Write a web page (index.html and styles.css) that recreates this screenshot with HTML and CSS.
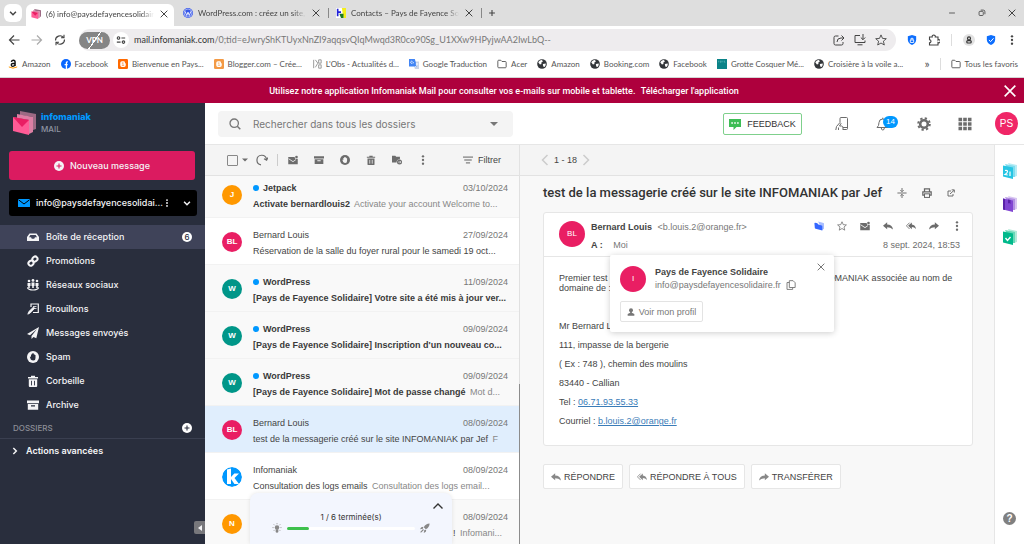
FILE: index.html
```html
<!DOCTYPE html>
<html lang="fr">
  <head>
    <meta charset="utf-8">
    <title>(6) info@paysdefayencesolidaire.fr</title>
    <link rel="stylesheet" href="styles.css">
  </head>
  <body>
    <svg class="sprite" aria-hidden="true">
      <symbol id="x" viewBox="0 0 12 12"><path d="M2 2l8 8M10 2l-8 8" fill="none" stroke="currentColor" stroke-width="1.2"/></symbol>
      <symbol id="down" viewBox="0 0 12 12"><path d="M2.500 4.500L6 8l3.500-3.500" fill="none" stroke="currentColor" stroke-width="1.800"/></symbol>
      <symbol id="left" viewBox="0 0 12 12"><path d="M8.500 1L3.500 6l5 5" fill="none" stroke="currentColor" stroke-width="1.500"/></symbol>
      <symbol id="right" viewBox="0 0 12 12"><path d="M3.500 1l5 5-5 5" fill="none" stroke="currentColor" stroke-width="1.500"/></symbol>
      <symbol id="caret" viewBox="0 0 8 8"><path d="M0 2h8L4 6z" fill="currentColor"/></symbol>
      <symbol id="dots" viewBox="0 0 12 12"><g fill="currentColor"><circle cx="6" cy="1.600" r="1.400"/><circle cx="6" cy="6" r="1.400"/><circle cx="6" cy="10.400" r="1.400"/></g></symbol>
      <symbol id="arrow-left" viewBox="0 0 12 12"><path d="M11.500 6H1.500M6 1.500L1.500 6 6 10.500" fill="none" stroke="currentColor" stroke-width="1.200"/></symbol>
      <symbol id="arrow-right" viewBox="0 0 12 12"><path d="M.5 6h10M6 1.500L10.500 6 6 10.500" fill="none" stroke="currentColor" stroke-width="1.200"/></symbol>
      <symbol id="reload" viewBox="0 0 12 12"><path d="M1.500 6.500a4.500 4.500 0 0 1 8-3M10.500 5.500a4.500 4.500 0 0 1-8 3M10 .8v3H7M2 11.200v-3h3" fill="none" stroke="currentColor" stroke-width="1.100"/></symbol>
      <symbol id="sliders" viewBox="0 0 12 12"><g fill="none" stroke="currentColor" stroke-width="1.300"><circle cx="3" cy="3.500" r="1.500"/><path d="M6.500 3.500H11M1 8.500h4.500"/><circle cx="9" cy="8.500" r="1.500"/></g></symbol>
      <symbol id="share" viewBox="0 0 12 12"><path d="M5.500 2H2.500Q1 2 1 3.500v6Q1 11 2.500 11h6Q10 11 10 9.500V8M4 8q0-4 4-4h3M8.500 1.500L11 4 8.500 6.500" fill="none" stroke="currentColor" stroke-width="1"/></symbol>
      <symbol id="install" viewBox="0 0 12 12"><path d="M6 1.500H1v7h10V6.500M3.500 10.800h5M9 0v5.500M6.800 3.500L9 5.700l2.200-2.200" fill="none" stroke="currentColor" stroke-width="1"/></symbol>
      <symbol id="star" viewBox="0 0 12 12"><path d="M6 .9l1.500 3.500 3.800.3-2.900 2.500.9 3.800L6 9l-3.300 2 .9-3.800L.7 4.700l3.800-.3z" fill="none" stroke="currentColor" stroke-width=".9"/></symbol>
      <symbol id="shield" viewBox="0 0 12 12"><path d="M6 0l5 1.500v4q0 4.500-5 6.500-5-2-5-6.500v-4z" fill="#0d6efd"/></symbol>
      <symbol id="puzzle" viewBox="0 0 12 12"><path d="M1.500 3h2.700a1.600 1.600 0 1 1 3.100 0H10v3a1.500 1.500 0 1 1 0 2.500V11H1.500V8.700a1.500 1.500 0 1 0 0-3z" fill="none" stroke="currentColor" stroke-width="1.100"/></symbol>
      <symbol id="folder" viewBox="0 0 12 12"><path d="M1 2.500Q1 1.500 2 1.500h2.500L6 3h4q1 0 1 1v5.500q0 1-1 1H2q-1 0-1-1z" fill="none" stroke="currentColor" stroke-width="1.100"/></symbol>
      <symbol id="globe" viewBox="0 0 12 12"><circle cx="6" cy="6" r="5.800" fill="#33363a"/><path d="M1.500 4q2-3 4.500-2.800L7 3 5 4.500 5.500 6l-2 .500zM7 6l3.500-.500q.5 2-1.500 4L7.500 9z" fill="#fff"/></symbol>
      <symbol id="blogger" viewBox="0 0 12 12"><rect width="12" height="12" rx="1.500" fill="currentColor"/><path d="M4.700 2.800h2q1.700 0 1.700 1.600 0 .8.900.9v2.200q0 2-2 2H4.700q-2 0-2-2V4.800q0-2 2-2z" fill="#fff"/><path d="M4.600 4.900h2M4.600 7.400h2.800" stroke="currentColor" stroke-width="1"/></symbol>
      <symbol id="cube" viewBox="0 0 24 24"><path d="M8 0l16 3v15l-3 1V6L8 4z" fill="#9d6a84"/><path d="M5 3l16 3v15l-4 2V9L5 7z" fill="#dc7fa4"/><path d="M1 6l16 3v15L1 20z" fill="#ff5b96"/><path d="M1 6l9 10 7-7z" fill="#e91e63"/></symbol>
      <symbol id="plus-circle" viewBox="0 0 12 12"><circle cx="6" cy="6" r="6" fill="currentColor"/><path d="M6 3v6M3 6h6" stroke="var(--cut)" stroke-width="1.300"/></symbol>
      <symbol id="envelope" viewBox="0 0 12 8"><rect width="12" height="8" rx=".5" fill="#0098ff"/><path d="M.5.800L6 5 11.500.800" fill="none" stroke="#000" stroke-width="1"/></symbol>
      <symbol id="inbox" viewBox="0 0 12 12"><path d="M2.500 2.500h7L12 6v4H0V6zM3.300 4L2 6.300h2l.8 1.400h2.400L8 6.300h2L8.700 4z" fill="currentColor" fill-rule="evenodd"/></symbol>
      <symbol id="link" viewBox="0 0 12 12"><g fill="none" stroke="currentColor" stroke-width="2"><rect x="5.300" y="1.700" width="5.200" height="4.600" rx="2.200" transform="rotate(-40 8 4)"/><rect x="1.300" y="5.800" width="5.200" height="4.600" rx="2.200" transform="rotate(-40 4 8)"/></g></symbol>
      <symbol id="people" viewBox="0 0 12 12"><g fill="currentColor"><circle cx="2" cy="2" r="1.300"/><circle cx="6" cy="1.400" r="1.400"/><circle cx="10" cy="2" r="1.300"/><path d="M.5 4h3v3h-.7v2H1.200V7H.5zM4.500 3.400h3V7h-.7v2H5.200V7h-.7zM8.500 4h3v3h-.7v2H9.200V7h-.7z"/></g><path d="M.3 8.500q1 2.500 5.700 2.500t5.700-2.500" fill="none" stroke="currentColor" stroke-width="1.200"/></symbol>
      <symbol id="draft" viewBox="0 0 12 12"><path d="M4 4V1h7.300v8.500H6" fill="none" stroke="currentColor" stroke-width="1.200"/><path d="M6 3.500h3.500M6.500 5.500h3M.8 11.200l1-2.600L6.500 4l1.200 1.300L3.200 10z" fill="currentColor" stroke="currentColor" stroke-width=".8"/></symbol>
      <symbol id="plane" viewBox="0 0 12 12"><path d="M12 0L0 7l3 1.200L10 2 4.500 8.900V12l2-2 2.800 1.200z" fill="currentColor"/></symbol>
      <symbol id="hand" viewBox="0 0 12 12"><circle cx="6" cy="6" r="6" fill="currentColor"/><path d="M3.800 8.500L2.800 5.800l.7-.2.500.6V3.500h.9v-.9h.9v-.3h.9v.9h.9v.7h.9V7Q8.500 9.600 6.500 9.600 4.700 9.600 3.800 8.500z" fill="var(--cut)"/></symbol>
      <symbol id="trash" viewBox="0 0 12 12"><path d="M1 2h3V.8h4V2h3v1.400H1zM1.800 4.200h8.400V11q0 1-1 1H2.800q-1 0-1-1z" fill="currentColor"/><path d="M4.500 5.800v4.600M7.500 5.800v4.600" stroke="var(--cut)" stroke-width=".9"/></symbol>
      <symbol id="archive" viewBox="0 0 12 12"><path d="M0 1.500h12v2.800H0zM.8 5.100h10.400v5.600H.8zM4 6.200v1.300h4V6.200z" fill="currentColor" fill-rule="evenodd"/></symbol>
      <symbol id="search" viewBox="0 0 12 12"><circle cx="5.200" cy="5.200" r="4.200" fill="none" stroke="currentColor" stroke-width="1.300"/><path d="M8.300 8.300l3 3" stroke="currentColor" stroke-width="1.500"/></symbol>
      <symbol id="sync" viewBox="0 0 12 12"><path d="M5 10.800a4.800 4.800 0 1 1 5.500-5.500M8 4.800l2.600 1.300L12 3.500" fill="none" stroke="currentColor" stroke-width="1.200"/></symbol>
      <symbol id="unread" viewBox="0 0 12 12"><path d="M.3 2.500H8a2.200 2.200 0 0 0 3.700 1.800V11H.3z" fill="currentColor"/><path d="M.8 4.500L6 8l3.500-2.500" fill="none" stroke="var(--cut)" stroke-width="1"/><circle cx="10.200" cy="2.500" r="1.600" fill="currentColor"/></symbol>
      <symbol id="move" viewBox="0 0 12 12"><path d="M0 1h4l1 1.200h4.500V5A3.800 3.800 0 0 0 5.500 9H0z" fill="currentColor"/><circle cx="9" cy="8.500" r="3" fill="currentColor"/><path d="M7.300 8.500h3.200M9.300 7.200l1.300 1.300-1.300 1.300" fill="none" stroke="var(--cut)" stroke-width=".8"/></symbol>
      <symbol id="filter" viewBox="0 0 12 12"><path d="M0 2.500h12M1.500 6h9M3.500 9.500h5" stroke="currentColor" stroke-width="1"/></symbol>
      <symbol id="chat" viewBox="0 0 12 12"><path d="M0 1h12v8H7.500L4.500 12V9H0z" fill="#3dbd55"/><path d="M2.300 5h1.600M5.200 5h1.600M8.100 5h1.600" stroke="#fff" stroke-width="1.400"/></symbol>
      <symbol id="phone" viewBox="0 0 14 14"><path d="M5 5V1.500Q5 .5 6 .5h5.500q1 0 1 1v10q0 1-1 1H8M8 10.500h4M.8 13l.7-3.500L5 5.500l1 1L4.500 9h2Q8 9 8 11v2M3.500 10.500V13" fill="none" stroke="currentColor" stroke-width="1"/></symbol>
      <symbol id="bell" viewBox="0 0 14 14"><path d="M1 10.500h11.500Q10.500 9 10.500 5.500 10.500 2 6.800 2T3 5.500Q3 9 1 10.500zM5.300 11q0 2 1.500 2t1.500-2M6.800 2V.7" fill="none" stroke="currentColor" stroke-width="1"/></symbol>
      <symbol id="gear" viewBox="0 0 14 14"><circle cx="7" cy="7" r="3.800" fill="none" stroke="currentColor" stroke-width="2.600"/><circle cx="7" cy="7" r="5.800" fill="none" stroke="currentColor" stroke-width="2" stroke-dasharray="2.280 2.280"/></symbol>
      <symbol id="apps" viewBox="0 0 14 14"><path d="M.5 2.500h13M.5 7h13M.5 11.500h13" stroke="currentColor" stroke-width="3.400" stroke-dasharray="3.600 1.100"/></symbol>
      <symbol id="collapse" viewBox="0 0 12 12"><path d="M.5 6h11M6 0v4M6 8v4M4 2.500l2 2 2-2M4 9.500l2-2 2 2" fill="none" stroke="currentColor" stroke-width="1.100"/></symbol>
      <symbol id="print" viewBox="0 0 12 12"><path d="M3 4V1h6v3M3 8.500H1V4.500h10v4H9" fill="none" stroke="currentColor" stroke-width="1.500"/><rect x="3" y="7" width="6" height="4.300" fill="none" stroke="currentColor" stroke-width="1.200"/></symbol>
      <symbol id="external" viewBox="0 0 12 12"><path d="M6 3H1.500v7.500H9V7.500M4.500 7.500L10.500 2M7 1.300h4v4" fill="none" stroke="currentColor" stroke-width="1.400"/></symbol>
      <symbol id="reply" viewBox="0 0 12 12"><path d="M5 1.500v2.700q6 0 7 6Q9 7.500 5 7.500V10L0 5.800z" fill="currentColor"/></symbol>
      <symbol id="reply-all" viewBox="0 0 12 12"><path d="M7 1.800v2.400q4.300.3 5 5.500Q10 7.500 7 7.300V9.800L2.500 5.800z" fill="currentColor"/><path d="M4.300 2L.5 5.800l3.800 3.800" fill="none" stroke="currentColor" stroke-width="1"/></symbol>
      <symbol id="forward" viewBox="0 0 12 12"><path d="M7 1.500v2.700q-6 0-7 6Q3 7.500 7 7.500V10l5-4.200z" fill="currentColor"/></symbol>
      <symbol id="kdrive" viewBox="0 0 12 12"><path d="M5 .500l6.500 2q.5 0 .5.800v6L9.500 11z" fill="#a9beff"/><path d="M.5 2.800q0-1 1-.8l2.500.7 1.200 1.600 4 1q.8.200.8 1v5.200L2 9.300q-.9-.2-1-1z" fill="#3467ff"/></symbol>
      <symbol id="copy" viewBox="0 0 12 12"><path d="M4 .8h4.500L11 3.300V9H4zM4 3H1.200v8.300H8V9" fill="none" stroke="currentColor" stroke-width="1.100"/></symbol>
      <symbol id="person" viewBox="0 0 12 12"><circle cx="6" cy="3.300" r="3" fill="currentColor"/><path d="M4.700 5h2.600v2.300L11 9v2.500H1V9l3.700-1.700z" fill="currentColor"/></symbol>
      <symbol id="bulb" viewBox="0 0 12 12"><circle cx="6" cy="5.500" r="2.700" fill="currentColor"/><path d="M4.800 8h2.400v3H4.800zM6 0v1.500M.5 5.500H2M10 5.500h1.500M2 1.500l1.200 1.200M10 1.500L8.800 2.700M2 9.500l1.200-1.200M10 9.500L8.800 8.300" fill="currentColor" stroke="currentColor" stroke-width=".8"/></symbol>
      <symbol id="rocket" viewBox="0 0 12 12"><path d="M11.500.5Q7 .5 4.500 5L7 7.500Q11.500 5 11.500.5zM4 4.500L1.500 5 0 7.500l3.500-.7zM7.500 8l-.5 2.500L4.500 12l.7-3.500zM3.700 7.300l1 1L1.500 11.500H.5v-1z" fill="currentColor"/></symbol>
    </svg>

    <!-- browser -->
    <div class="tabbar">
      <button class="tab-search" aria-label="Rechercher des onglets"><svg class="i10"><use href="#down"/></svg></button>
      <div class="tab tab-active">
        <svg class="i10"><use href="#cube"/></svg>
        <span class="tab-title">(6) info@paysdefayencesolidaire.fr</span>
        <button aria-label="Fermer"><svg class="i10"><use href="#x"/></svg></button>
      </div>
      <div class="tab">
        <svg class="i10" viewBox="0 0 12 12"><circle cx="6" cy="6" r="6" fill="#3858e9"/><circle cx="6" cy="6" r="4.800" fill="none" stroke="#fff" stroke-width=".6"/><path d="M2.500 4l2 5L6 5l1.500 4 2-5" fill="none" stroke="#fff"/></svg>
        <span class="tab-title">WordPress.com : créez un site, vendez</span>
        <button aria-label="Fermer"><svg class="i10"><use href="#x"/></svg></button>
      </div>
      <span class="tab-sep"></span>
      <div class="tab">
        <svg class="i10" viewBox="0 0 12 12"><path d="M0 0h12v12H0z" fill="#fff"/><path d="M7 0h5v12H9z" fill="#f4ef1b"/><path d="M1 1h2v9H1zM3 4h3v2H3z" fill="#2222d8"/><path d="M4 7h5v5H6z" fill="#1c7a26"/></svg>
        <span class="tab-title">Contacts – Pays de Fayence Solidaire</span>
        <button aria-label="Fermer"><svg class="i10"><use href="#x"/></svg></button>
      </div>
      <span class="tab-sep"></span>
      <button class="new-tab" aria-label="Nouvel onglet"><svg class="i10" viewBox="0 0 12 12"><path d="M6 2.500v7M2.500 6h7" stroke="currentColor" stroke-width="1.300"/></svg></button>
      <div class="window-buttons">
        <button aria-label="Réduire"><svg class="i10" viewBox="0 0 12 12"><path d="M2.500 6h7" stroke="currentColor"/></svg></button>
        <button aria-label="Restaurer"><svg class="i10" viewBox="0 0 12 12"><rect x="2.500" y="4" width="5" height="5" rx="1" fill="none" stroke="currentColor"/><path d="M4.500 2.500h3q2 0 2 2v3" fill="none" stroke="currentColor"/></svg></button>
        <button aria-label="Quitter"><svg class="i10"><use href="#x"/></svg></button>
      </div>
    </div>

    <div class="navbar">
      <button aria-label="Retour"><svg class="i12"><use href="#arrow-left"/></svg></button>
      <button class="disabled" aria-label="Suivant"><svg class="i12"><use href="#arrow-right"/></svg></button>
      <button aria-label="Actualiser"><svg class="i12"><use href="#reload"/></svg></button>
      <div class="omnibox">
        <span class="vpn">VPN</span>
        <span class="site-info"><svg class="i10"><use href="#sliders"/></svg></span>
        <span class="url"><b>mail.infomaniak.com</b>/0;tid=eJwryShKTUyxNnZI9aqqsvQIqMwqd3R0co90Sg_U1XXw9HPyjwAA2IwLbQ--</span>
        <svg class="i12"><use href="#share"/></svg>
        <svg class="i12"><use href="#install"/></svg>
        <svg class="i12"><use href="#star"/></svg>
      </div>
      <div class="extensions">
        <svg class="i10" viewBox="0 0 12 12"><use href="#shield"/><path d="M4 6h4v3H4zM4.800 6V4h2.400v2" fill="none" stroke="#fff"/></svg>
        <svg class="i12"><use href="#puzzle"/></svg>
        <span class="nav-sep"></span>
        <svg class="i12" viewBox="0 0 12 12"><circle cx="6" cy="6" r="6" fill="#e2e2e2"/><circle cx="6" cy="4.400" r="1.500" fill="none" stroke="#333" stroke-width="1.200"/><rect x="3.800" y="6.600" width="4.400" height="2.400" rx="1" fill="none" stroke="#333" stroke-width="1.200"/></svg>
        <svg class="i10" viewBox="0 0 12 12"><use href="#shield"/><path d="M3.500 6l2 2 3.500-4" fill="none" stroke="#fff" stroke-width="1.200"/></svg>
        <svg class="i10"><use href="#dots"/></svg>
      </div>
    </div>

    <div class="bookmarks">
      <a href="#"><svg class="i10" viewBox="0 0 12 12"><path d="M4 3.500Q4.500 1.500 6.500 1.500T8.500 4v4.500M8.500 5Q4 5 4 7t2 1.800T8.500 6.500" fill="none" stroke="#111" stroke-width="1.700"/><path d="M1 9.500q5 3 10 0" fill="none" stroke="#f90" stroke-width="1.200"/></svg>Amazon</a>
      <a href="#"><svg class="i10" viewBox="0 0 12 12"><circle cx="6" cy="6" r="6" fill="#0866ff"/><path d="M6.500 12V4.700q0-1.500 1.700-1.300M4.300 6.800h3.700" fill="none" stroke="#fff" stroke-width="1.600"/></svg>Facebook</a>
      <a href="#"><svg class="i10 blog"><use href="#blogger"/></svg>Bienvenue en Pays...</a>
      <a href="#"><svg class="i10 blog-light"><use href="#blogger"/></svg>Blogger.com – Crée...</a>
      <a href="#"><svg class="i10" viewBox="0 0 12 12"><path d="M2 1v10M4 1l3 4-3 5M8 1v4h3V1zM8 7h3v4H8z" fill="none" stroke="#888"/></svg>L'Obs - Actualités d...</a>
      <a href="#"><svg class="i10" viewBox="0 0 12 12"><path d="M5 3h7v9H7z" fill="#c9d3e6"/><path d="M0 0h7l2.500 9H0z" fill="#4285f4"/><path d="M6 4.500H4.500a1.300 1.300 0 1 1-.3-1.500M8 6h3M9.500 5v1q0 2-2 3.500" fill="none" stroke="#fff" stroke-width=".9"/></svg>Google Traduction</a>
      <a href="#"><svg class="i10"><use href="#folder"/></svg>Acer</a>
      <a href="#"><svg class="i10"><use href="#globe"/></svg>Amazon</a>
      <a href="#"><svg class="i10"><use href="#globe"/></svg>Booking.com</a>
      <a href="#"><svg class="i10"><use href="#globe"/></svg>Facebook</a>
      <a href="#"><svg class="i10" viewBox="0 0 12 12"><path d="M0 0h12v12H0z" fill="#0b8388"/><path d="M2 2v2M4 2v2h1V2M7 2v2M9 2v2h1" fill="none" stroke="#69bdc0" stroke-width=".7"/></svg>Grotte Cosquer Mé...</a>
      <a href="#"><svg class="i10"><use href="#globe"/></svg>Croisière à la voile a...</a>
      <div class="bookmarks-end">
        <span class="more">»</span>
        <span class="nav-sep"></span>
        <a href="#"><svg class="i10"><use href="#folder"/></svg>Tous les favoris</a>
      </div>
    </div>

    <div class="banner">
      <p>Utilisez notre application Infomaniak Mail pour consulter vos e-mails sur mobile et tablette. <a href="#">Télécharger l'application</a></p>
      <button aria-label="Fermer"><svg class="i16"><use href="#x"/></svg></button>
    </div>

    <div class="app">
      <div class="sidebar">
        <div class="brand">
          <svg class="i24"><use href="#cube"/></svg>
          <div><strong>infomaniak</strong><span>MAIL</span></div>
        </div>
        <button class="compose"><svg class="i10"><use href="#plus-circle"/></svg>Nouveau message</button>
        <div class="account">
          <svg class="mail"><use href="#envelope"/></svg>
          <span>info@paysdefayencesolidai...</span>
          <svg class="i8"><use href="#dots"/></svg>
          <svg class="i10"><use href="#down"/></svg>
        </div>
        <nav class="folders">
          <a class="active" href="#"><svg class="i12"><use href="#inbox"/></svg>Boîte de réception<span class="count">6</span></a>
          <a href="#"><svg class="i12"><use href="#link"/></svg>Promotions</a>
          <a href="#"><svg class="i12"><use href="#people"/></svg>Réseaux sociaux</a>
          <a href="#"><svg class="i12"><use href="#draft"/></svg>Brouillons</a>
          <a href="#"><svg class="i12"><use href="#plane"/></svg>Messages envoyés</a>
          <a href="#"><svg class="i12"><use href="#hand"/></svg>Spam</a>
          <a href="#"><svg class="i12"><use href="#trash"/></svg>Corbeille</a>
          <a href="#"><svg class="i12"><use href="#archive"/></svg>Archive</a>
        </nav>
        <div class="folders-title">DOSSIERS <button aria-label="Nouveau dossier"><svg class="i10"><use href="#plus-circle"/></svg></button></div>
        <button class="advanced"><svg class="i8" viewBox="0 0 12 12"><path d="M3.500 1.500L8 6l-4.500 4.500" fill="none" stroke="currentColor" stroke-width="2.200"/></svg>Actions avancées</button>
        <button class="fold" aria-label="Réduire le menu"><svg class="i8" viewBox="0 0 8 8"><path d="M6 1v6L2 4z" fill="currentColor"/></svg></button>
      </div>

      <div class="main">
        <div class="header">
          <div class="search">
            <svg class="i12"><use href="#search"/></svg>
            <input type="text" placeholder="Rechercher dans tous les dossiers" aria-label="Rechercher">
            <svg class="i8"><use href="#caret"/></svg>
          </div>
          <div class="header-right">
            <button class="feedback"><svg class="i12"><use href="#chat"/></svg>FEEDBACK</button>
            <button aria-label="Mobile"><svg class="i14"><use href="#phone"/></svg></button>
            <button class="bell" aria-label="Notifications"><svg class="i14"><use href="#bell"/></svg><span class="badge">14</span></button>
            <button aria-label="Paramètres"><svg class="i14"><use href="#gear"/></svg></button>
            <button aria-label="Applications"><svg class="i14"><use href="#apps"/></svg></button>
            <span class="avatar avatar-me">PS</span>
          </div>
        </div>

        <div class="columns">
          <div class="list">
            <div class="toolbar">
              <input type="checkbox" aria-label="Tout sélectionner">
              <svg class="i6"><use href="#caret"/></svg>
              <button class="sync" aria-label="Actualiser"><svg class="i12"><use href="#sync"/></svg></button>
              <span class="tool-sep"></span>
              <div class="tools">
                <button aria-label="Non lu"><svg class="i10"><use href="#unread"/></svg></button>
                <button aria-label="Archiver"><svg class="i10"><use href="#archive"/></svg></button>
                <button aria-label="Spam"><svg class="i10"><use href="#hand"/></svg></button>
                <button aria-label="Supprimer"><svg class="i10"><use href="#trash"/></svg></button>
                <button aria-label="Déplacer"><svg class="i10"><use href="#move"/></svg></button>
                <button aria-label="Plus"><svg class="i10"><use href="#dots"/></svg></button>
              </div>
              <button class="filter"><svg class="i10"><use href="#filter"/></svg>Filtrer</button>
            </div>

            <div class="messages">
              <div class="rows">
                <div class="row unread">
                  <span class="avatar orange">J</span>
                  <div class="from"><strong>Jetpack</strong><time>03/10/2024</time></div>
                  <p><strong>Activate bernardlouis2</strong> Activate your account Welcome to...</p>
                </div>
                <div class="row">
                  <span class="avatar pink">BL</span>
                  <div class="from"><strong>Bernard Louis</strong><time>27/09/2024</time></div>
                  <p><strong>Réservation de la salle du foyer rural pour le samedi 19 oct...</strong></p>
                </div>
                <div class="row unread">
                  <span class="avatar green">W</span>
                  <div class="from"><strong>WordPress</strong><time>11/09/2024</time></div>
                  <p><strong>[Pays de Fayence Solidaire] Votre site a été mis à jour ver...</strong></p>
                </div>
                <div class="row unread">
                  <span class="avatar green">W</span>
                  <div class="from"><strong>WordPress</strong><time>09/09/2024</time></div>
                  <p><strong>[Pays de Fayence Solidaire] Inscription d'un nouveau co...</strong></p>
                </div>
                <div class="row unread">
                  <span class="avatar green">W</span>
                  <div class="from"><strong>WordPress</strong><time>09/09/2024</time></div>
                  <p><strong>[Pays de Fayence Solidaire] Mot de passe changé</strong> Mot d...</p>
                </div>
                <div class="row selected">
                  <span class="avatar pink">BL</span>
                  <div class="from"><strong>Bernard Louis</strong><time>08/09/2024</time></div>
                  <p><strong>test de la messagerie créé sur le site INFOMANIAK par Jef</strong> F</p>
                </div>
                <div class="row">
                  <svg class="avatar" viewBox="0 0 20 20"><circle cx="10" cy="10" r="10" fill="#0098ff"/><path d="M5 2.500l4-1V10l3.300-3.500H17L12.500 11l4.500 6h-4.600L9 12v5H5z" fill="#fff"/></svg>
                  <div class="from"><strong>Infomaniak</strong><time>08/09/2024</time></div>
                  <p><strong>Consultation des logs emails</strong> Consultation des logs email...</p>
                </div>
                <div class="row seen">
                  <span class="avatar orange">N</span>
                  <div class="from"><time>08/09/2024</time></div>
                  <p class="tail"><strong>!</strong> Infomani...</p>
                </div>
              </div>
              <div class="scrollbar"><span></span></div>
              <div class="onboarding">
                <svg class="i12 fold-up" viewBox="0 0 12 12"><path d="M1.500 8.500L6 4l4.500 4.500" fill="none" stroke="currentColor" stroke-width="1.400"/></svg>
                <p>1 / 6 terminée(s)</p>
                <div class="progress">
                  <svg class="i10"><use href="#bulb"/></svg>
                  <div class="bar"><span style="width: 17%"></span></div>
                  <svg class="i10"><use href="#rocket"/></svg>
                </div>
              </div>
            </div>
          </div>

          <div class="reader">
            <div class="toolbar pager">
              <button aria-label="Précédent"><svg class="i12"><use href="#left"/></svg></button>
              <span>1 - 18</span>
              <button aria-label="Suivant"><svg class="i12"><use href="#right"/></svg></button>
            </div>
            <div class="thread">
              <div class="subject">
                <h1>test de la messagerie créé sur le site INFOMANIAK par Jef</h1>
                <button aria-label="Réduire"><svg class="i10"><use href="#collapse"/></svg></button>
                <button aria-label="Imprimer"><svg class="i10"><use href="#print"/></svg></button>
                <button aria-label="Ouvrir"><svg class="i8"><use href="#external"/></svg></button>
              </div>

              <div class="card">
                <div class="card-head">
                  <span class="avatar pink big">BL</span>
                  <div class="people">
                    <p><strong>Bernard Louis</strong> &lt;b.louis.2@orange.fr&gt;</p>
                    <p><strong class="to">A :</strong> Moi</p>
                  </div>
                  <div class="card-right">
                    <div class="card-actions">
                      <svg class="i10"><use href="#kdrive"/></svg>
                      <button aria-label="Favori"><svg class="i10"><use href="#star"/></svg></button>
                      <button aria-label="Non lu"><svg class="i10"><use href="#unread"/></svg></button>
                      <button aria-label="Répondre"><svg class="i10"><use href="#reply"/></svg></button>
                      <button aria-label="Répondre à tous"><svg class="i10"><use href="#reply-all"/></svg></button>
                      <button aria-label="Transférer"><svg class="i10"><use href="#forward"/></svg></button>
                      <button aria-label="Plus"><svg class="i10"><use href="#dots"/></svg></button>
                    </div>
                    <time>8 sept. 2024, 18:53</time>
                  </div>
                  <div class="contact">
                    <span class="avatar pink big">I</span>
                    <div class="contact-text">
                      <strong>Pays de Fayence Solidaire</strong>
                      <span>info@paysdefayencesolidaire.fr <svg class="i10"><use href="#copy"/></svg></span>
                    </div>
                    <button class="close" aria-label="Fermer"><svg class="i10"><use href="#x"/></svg></button>
                    <button class="profile"><svg class="i8"><use href="#person"/></svg>Voir mon profil</button>
                  </div>
                </div>
                <div class="card-body">
                  <p>Premier test de la nouvelle messagerie créée par Jef sur le site INFOMANIAK associée au nom de<br>domaine de : paysdefayencesolidaire.fr</p>
                  <p>&nbsp;</p>
                  <p>Mr Bernard Louis</p>
                  <p>111, impasse de la bergerie</p>
                  <p>( Ex : 748 ), chemin des moulins</p>
                  <p>83440 - Callian</p>
                  <p>Tel : <a href="#">06.71.93.55.33</a></p>
                  <p>Courriel : <a href="#">b.louis.2@orange.fr</a></p>
                </div>
              </div>

              <div class="replies">
                <button><svg class="i10"><use href="#reply"/></svg>RÉPONDRE</button>
                <button><svg class="i10"><use href="#reply-all"/></svg>RÉPONDRE À TOUS</button>
                <button><svg class="i10"><use href="#forward"/></svg>TRANSFÉRER</button>
              </div>
            </div>
          </div>

          <div class="rail">
            <svg class="i16" viewBox="0 0 16 16"><path d="M6 0l9 2v11l-3 1z" fill="#b5ecf5"/><path d="M3 1l10 2v11H9z" fill="#7fdcee"/><path d="M1 2.500l10 2V16L1 13.500z" fill="#26c5e3"/><path d="M3 7.500q2.500-.5 2.500 1T3 11.500l2.700.5M8 8.500V13" fill="none" stroke="#fff" stroke-width="1.200"/></svg>
            <svg class="i16" viewBox="0 0 16 16"><path d="M6 0l9 2v11l-3 1z" fill="#d9c6f2"/><path d="M3 1l10 2v11H9z" fill="#b290e2"/><path d="M1 2.500l10 2V16L1 13.500z" fill="#8146d2"/><path d="M1 2.500l2 .4v11L1 13.500zM6 3.500l2.500.5v4L7.200 7 6 7.500z" fill="#5a22a8"/></svg>
            <svg class="i16" viewBox="0 0 16 16"><path d="M6 0l9 2v11l-3 1z" fill="#b2ead9"/><path d="M3 1l10 2v11H9z" fill="#66d8b7"/><path d="M1 2.500l10 2V16L1 13.500z" fill="#00b98b"/><path d="M3.500 9l2 2.500L8.500 8" fill="none" stroke="#fff" stroke-width="1.400"/></svg>
            <button class="help" aria-label="Aide">?</button>
          </div>
        </div>
      </div>
    </div>
  </body>
</html>
```

FILE: styles.css
```css
* {
  box-sizing: border-box;
}

body {
  margin: 0;
  height: 100vh;
  display: flex;
  flex-direction: column;
  overflow: hidden;
  font-family: "Liberation Sans", Arial, sans-serif;
  font-size: 9px;
  line-height: 12px;
  color: #555;
  --cut: #f4f4f4;
}

p, h1 {
  margin: 0;
}

a {
  color: inherit;
  text-decoration: none;
}

button {
  padding: 0;
  border: none;
  background: none;
  font: inherit;
  color: inherit;
  cursor: pointer;
  display: flex;
  align-items: center;
  justify-content: center;
}

svg {
  display: block;
  flex: none;
}

.sprite { position: absolute; width: 0; height: 0; }
.i6 { width: 6px; height: 6px; }
.i8 { width: 8px; height: 8px; }
.i10 { width: 10px; height: 10px; }
.i12 { width: 12px; height: 12px; }
.i14 { width: 14px; height: 14px; }
.i16 { width: 16px; height: 16px; }
.i24 { width: 24px; height: 24px; }

/* Browser */
.tabbar, .navbar, .bookmarks {
  display: flex;
  align-items: center;
  flex: none;
  font-family: Lato, "Open Sans", sans-serif;
  font-size: 8px;
  color: #444;
}

.tabbar {
  height: 26px;
  padding: 0 4px;
  background-color: #dedede;
}

.tab-search {
  width: 18px;
  height: 18px;
  border-radius: 6px;
  background-color: #fff;
}

.tab {
  display: flex;
  align-items: center;
  gap: 5px;
  width: 148px;
  padding: 0 5px;
}

.tab-active {
  align-self: flex-end;
  height: 22px;
  margin: 0 4px;
  padding-bottom: 2px;
  border-radius: 6px 6px 0 0;
  background-color: #fff;
}

.tab-title {
  flex: 1;
  overflow: hidden;
  white-space: nowrap;
  mask-image: linear-gradient(to right, #000 88%, transparent);
}

.tab-sep {
  flex: none;
  width: 1px;
  height: 10px;
  margin: 0 2px;
  background-color: #888;
}

.new-tab {
  margin-left: 3px;
}

.window-buttons {
  display: flex;
  gap: 20px;
  margin-left: auto;
  margin-right: 3px;
}

.navbar {
  height: 28px;
  padding: 0 7px 0 8px;
  gap: 11px;
}

.navbar .disabled {
  color: #aaa;
}

.omnibox {
  display: flex;
  align-items: center;
  flex: 1;
  gap: 9px;
  height: 22px;
  margin-left: 2px;
  padding-right: 9px;
  border-radius: 11px;
  background-color: #eeecee;
}

.vpn {
  width: 31px;
  height: 17px;
  border-radius: 9px;
  background: linear-gradient(125deg, transparent 49%, #fff 49%, #fff 52%, transparent 52%) #858585;
  color: #fff;
  font-weight: bold;
  line-height: 17px;
  text-align: center;
}

.site-info {
  display: flex;
  align-items: center;
  justify-content: center;
  width: 16px;
  height: 16px;
  margin-left: -6px;
  border-radius: 8px;
  background-color: #fff;
}

.url {
  flex: 1;
  margin-left: -4px;
  overflow: hidden;
  white-space: nowrap;
  font-family: Lato, sans-serif;
  font-size: 9px;
  color: #777;
}

.url b {
  font-weight: normal;
  color: #333;
}

.extensions {
  display: flex;
  align-items: center;
  gap: 11px;
}

.nav-sep {
  width: 1px;
  height: 12px;
  background-color: #ddd;
}

.bookmarks {
  height: 24px;
  padding: 0 6px 3px 8px;
  gap: 10px;
  border-bottom: 1px solid #d5d5d5;
  color: #555;
  white-space: nowrap;
}

.bookmarks a {
  display: flex;
  align-items: center;
  gap: 4px;
}

.blog { color: #ff6a00; }
.blog-light { color: #f39a45; }

.bookmarks-end {
  display: flex;
  align-items: center;
  gap: 10px;
  margin-left: auto;
}

.more {
  font-size: 12px;
}

/* Banner */
.banner {
  display: flex;
  align-items: center;
  flex: none;
  height: 25px;
  padding: 0 6px;
  background-color: #ae003d;
  color: #fff;
  font-family: Roboto, sans-serif;
  font-weight: 500;
}

.banner p {
  flex: 1;
  text-align: center;
}

.banner a {
  margin-left: 3px;
}

.app {
  display: flex;
  flex: 1;
  min-height: 0;
}

/* Sidebar */
.sidebar {
  position: relative;
  flex: none;
  width: 205px;
  background-color: #292e3d;
  color: #f4f4f6;
  font-family: Inter, "Liberation Sans", sans-serif;
  font-weight: 500;
  --cut: #292e3d;
}

.brand {
  display: flex;
  gap: 5px;
  padding: 8px 12px 0;
  height: 48px;
}

.brand strong, .brand span {
  display: block;
}

.brand strong {
  color: #0098ff;
  font-weight: 800;
}

.brand span {
  color: #8f95a3;
  font-size: 8px;
}

.compose {
  width: 186px;
  height: 29px;
  margin-left: 9px;
  gap: 6px;
  border-radius: 3px;
  background-color: #db1b60;
  --cut: #db1b60;
}

.account {
  display: flex;
  align-items: center;
  height: 26px;
  margin: 10px 8px 9px 9px;
  padding: 0 7px 0 9px;
  border-radius: 3px;
  background-color: #000;
}

.account span {
  flex: 1;
  margin-left: 6px;
}

.account .i8 {
  margin-right: 11px;
}

.mail {
  width: 12px;
  height: 8px;
}

.folders a {
  display: flex;
  align-items: center;
  gap: 7px;
  height: 24px;
  padding: 0 13px 0 27px;
}

.folders .active {
  background-color: #3f4359;
  --cut: #3f4359;
}

.count {
  width: 10px;
  height: 10px;
  margin-left: auto;
  border-radius: 5px;
  background-color: #fff;
  color: #292e3d;
  font-size: 8px;
  line-height: 10px;
  text-align: center;
}

.folders-title {
  display: flex;
  align-items: center;
  justify-content: space-between;
  height: 22px;
  padding: 0 13px;
  border-bottom: 1px solid #3a3f50;
  color: #8d8f98;
  font-size: 8px;
}

.folders-title button {
  color: #fff;
}

.advanced {
  gap: 7px;
  height: 24px;
  margin-left: 11px;
  font-weight: 600;
}

.fold {
  position: absolute;
  right: 0;
  bottom: 10px;
  width: 11px;
  height: 13px;
  border-radius: 2px 0 0 2px;
  background-color: #77777b;
}

/* Main */
.main {
  display: flex;
  flex-direction: column;
  flex: 1;
  min-width: 0;
}

.header {
  display: flex;
  align-items: center;
  justify-content: space-between;
  flex: none;
  height: 42px;
  padding: 0 6px 0 13px;
  border-bottom: 1px solid #e6e6e6;
}

.search {
  display: flex;
  align-items: center;
  width: 295px;
  height: 26px;
  padding: 0 15px 0 11px;
  border-radius: 4px;
  background-color: #f4f4f4;
  color: #777;
}

.search input {
  flex: 1;
  min-width: 0;
  margin-left: 12px;
  padding: 0;
  border: none;
  outline: none;
  background: none;
  font-family: Inter, sans-serif;
  font-size: 10px;
}

.search input::placeholder {
  color: #777;
}

.header-right {
  display: flex;
  align-items: center;
  gap: 27px;
  color: #6c6c6c;
}

.feedback {
  width: 79px;
  height: 22px;
  gap: 6px;
  margin-right: 6px;
  border: 1px solid #7fd08c;
  border-radius: 2px;
  color: #333;
}

.bell {
  position: relative;
}

.badge {
  position: absolute;
  left: 7px;
  top: -1px;
  width: 15px;
  height: 12px;
  border-radius: 6px;
  background-color: #0098ff;
  color: #fff;
  font-size: 8px;
}

.avatar {
  display: flex;
  align-items: center;
  justify-content: center;
  flex: none;
  width: 20px;
  height: 20px;
  border-radius: 50%;
  color: #fff;
  font-size: 8px;
  font-weight: bold;
}

.avatar-me {
  width: 23px;
  height: 23px;
  margin-left: -4px;
  background-color: #f02667;
  font-size: 10px;
  font-weight: normal;
}

.big {
  width: 26px;
  height: 26px;
  font-weight: normal;
}

.pink { background-color: #e91e63; }
.orange { background-color: #ff9800; }
.green { background-color: #009688; }

.columns {
  display: flex;
  flex: 1;
  min-height: 0;
}

.toolbar {
  display: flex;
  align-items: center;
  flex: none;
  height: 31px;
  background-color: #f4f4f4;
  border-bottom: 1px solid #e2e2e2;
  color: #6c6c6c;
}

.list {
  display: flex;
  flex-direction: column;
  flex: none;
  width: 315px;
}

.list .toolbar {
  padding: 0 18px 0 22px;
  border-right: 1px solid #e2e2e2;
}

.toolbar input {
  appearance: none;
  width: 11px;
  height: 11px;
  margin: 0 4px 0 0;
  border: 1px solid #888;
  border-radius: 1px;
}

.sync {
  margin-left: 8px;
}

.tool-sep {
  width: 1px;
  height: 12px;
  margin: 0 10px 0 9px;
  background-color: #ccc;
}

.tools {
  display: flex;
  gap: 16px;
}

.filter {
  gap: 5px;
  margin-left: auto;
  color: #444;
  font-size: 9px;
}

.messages {
  position: relative;
  display: flex;
  flex: 1;
  min-height: 0;
  overflow: hidden;
}

.rows {
  flex: 1;
  margin-top: -5px;
}

.row {
  position: relative;
  height: 47px;
  padding: 11px 11px 0 48px;
  border-bottom: 1px solid #f2f2f2;
  white-space: nowrap;
}

.row .avatar {
  position: absolute;
  left: 17px;
  top: 14px;
}

.row strong {
  font-weight: normal;
  color: #444;
}

.row p {
  margin-top: 4px;
  color: #888;
}

.row p strong {
  margin-right: 2px;
}

.row .tail {
  text-align: right;
  padding-right: 6px;
}

.unread, .seen {
  background-color: #f9f9f9;
}

.unread strong {
  font-weight: bold;
  color: #3a3a3a;
}

.unread .from::before {
  content: "";
  width: 6px;
  height: 6px;
  margin-right: 4px;
  border-radius: 50%;
  background-color: #0098ff;
}

.selected {
  background-color: #e0eefd;
}

.from {
  display: flex;
  align-items: center;
}

.from time {
  margin-left: auto;
  color: #777;
}

.scrollbar {
  flex: none;
  width: 3px;
  padding-top: 208px;
  background-color: #e0e0e0;
}

.scrollbar span {
  display: block;
  height: 100%;
  background-color: #8c8c8c;
}

.onboarding {
  position: absolute;
  left: 45px;
  bottom: 0;
  width: 202px;
  height: 51px;
  padding: 18px 22px 0;
  border-radius: 8px 8px 0 0;
  background-color: #f3f6fe;
  box-shadow: 0 0 4px rgba(0, 0, 0, 0.1);
  color: #333;
  font-family: Inter, sans-serif;
  font-size: 8px;
  text-align: center;
}

.fold-up {
  position: absolute;
  right: 8px;
  top: 7px;
}

.progress {
  display: flex;
  align-items: center;
  justify-content: space-between;
  color: #888;
}

.bar {
  width: 128px;
  height: 3px;
  border-radius: 2px;
  background-color: #fff;
}

.bar span {
  display: block;
  height: 3px;
  border-radius: 2px;
  background-color: #3dc04c;
}

/* Reader */
.reader {
  display: flex;
  flex-direction: column;
  flex: 1;
  min-width: 0;
  background-color: #f8f8f8;
}

.pager {
  padding: 0 19px;
  gap: 3px;
}

.pager span {
  color: #444;
}

.pager button {
  color: #ccc;
}

.thread {
  flex: 1;
  padding: 9px 21px 0 23px;
}

.subject {
  display: flex;
  align-items: center;
  gap: 15px;
  height: 16px;
  margin-bottom: 11px;
  color: #666;
}

.subject h1 {
  font-family: Roboto, sans-serif;
  font-size: 13px;
  font-weight: 500;
  line-height: 16px;
  white-space: nowrap;
  color: #333;
}

.card {
  border: 1px solid #e6e6e6;
  border-radius: 3px;
  background-color: #fff;
}

.card-head {
  position: relative;
  display: flex;
  height: 44px;
  padding: 8px 10px 0 15px;
  border-bottom: 1px solid #e6e6e6;
  --cut: #fff;
}

.people {
  margin-left: 6px;
  color: #777;
}

.people p {
  height: 18px;
}

.people strong {
  margin-right: 3px;
  color: #444;
}

.people .to {
  margin-right: 8px;
}

.card-right {
  margin-left: auto;
  color: #6c6c6c;
}

.card-actions {
  display: flex;
  gap: 13px;
  height: 18px;
  align-items: flex-start;
}

.card-right time {
  display: block;
  margin-right: 2px;
  text-align: right;
}

.contact {
  position: absolute;
  left: 66px;
  top: 42px;
  display: flex;
  flex-wrap: wrap;
  align-content: flex-start;
  gap: 9px;
  width: 224px;
  height: 77px;
  padding: 11px 10px 0;
  border-radius: 2px;
  background-color: #fff;
  box-shadow: 0 1px 6px rgba(0, 0, 0, 0.2);
  color: #777;
}

.contact-text {
  flex: 1;
}

.contact strong {
  display: block;
  color: #444;
}

.contact-text span {
  display: flex;
  align-items: center;
  gap: 5px;
  height: 14px;
}

.close {
  position: absolute;
  right: 8px;
  top: 7px;
}

.profile {
  width: 83px;
  height: 21px;
  gap: 4px;
  border: 1px solid #e3e3e3;
  border-radius: 2px;
}

.card-body {
  padding: 16px 15px 19px;
  color: #444;
  line-height: 10px;
}

.card-body p {
  margin-bottom: 9px;
}

.card-body p:last-child {
  margin-bottom: 0;
}

.card-body a {
  color: #3a7cb8;
  text-decoration: underline;
}

.replies {
  display: flex;
  gap: 6px;
  margin-top: 18px;
}

.replies button {
  gap: 3px;
  height: 25px;
  padding: 0 7px;
  border: 1px solid #e6e6e6;
  border-radius: 2px;
  background-color: #fff;
  color: #444;
}

.replies svg {
  color: #888;
}

.rail {
  display: flex;
  flex-direction: column;
  align-items: center;
  flex: none;
  gap: 17px;
  width: 30px;
  padding: 18px 0 19px;
  border-left: 1px solid #e6e6e6;
}

.help {
  width: 13px;
  height: 13px;
  margin-top: auto;
  border-radius: 50%;
  background-color: #808080;
  color: #fff;
  font-size: 10px;
  font-weight: bold;
}
```
